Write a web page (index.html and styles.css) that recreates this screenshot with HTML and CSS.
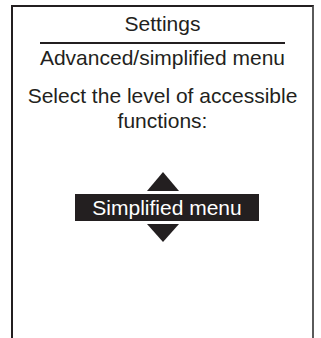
FILE: index.html
```html
<!DOCTYPE html>
<html lang="en">
<head>
  <meta charset="UTF-8" />
  <title>Settings</title>
  <link rel="stylesheet" href="styles.css">
</head>
<body>

  <div class="screen">
    <div class="title">Settings</div>
    <div class="rule"></div>
    <div class="subtitle">Advanced/simplified menu</div>

    <p class="prompt">Select the level of accessible functions:</p>

    <!-- Value selector -->
    <div class="selector">
      <div class="arrow arrow-up"></div>
      <div class="value">Simplified menu</div>
      <div class="arrow arrow-down"></div>
    </div>
  </div>

</body>
</html>
```

FILE: styles.css
```css
body {
  margin: 0;
  background: #fff;
  color: #231f20;
  font-family: "Liberation Sans", Arial, sans-serif;
  font-size: 21px;
  line-height: 25px;
}
.screen {
  box-sizing: border-box;
  width: 303px;
  height: 333px;
  margin: 5px 0 0 11px;
  padding-top: 4px;
  border: 2px solid #231f20;
  border-right-color: #5a5a5a;
  border-bottom: none;
  text-align: center;
}
.rule {
  width: 245px;
  height: 2px;
  margin: 6px auto 0;
  background: #231f20;
}
.subtitle { margin-top: 1px; }
.prompt {
  margin: 13px 0 0;
  padding: 0 8px;
}
/* selector with arrows */
.selector {
  display: flex;
  flex-direction: column;
  align-items: center;
  margin-top: 39px;
}
.arrow {
  width: 0;
  height: 0;
  border-left: 16.5px solid transparent;
  border-right: 16.5px solid transparent;
}
.arrow-up { border-bottom: 19px solid #231f20; }
.arrow-down { border-top: 18px solid #231f20; }
.value {
  margin: 3px 0 3px 9px;
  padding: 0 17px;
  line-height: 27px;
  background: #231f20;
  color: #fff;
}
```
